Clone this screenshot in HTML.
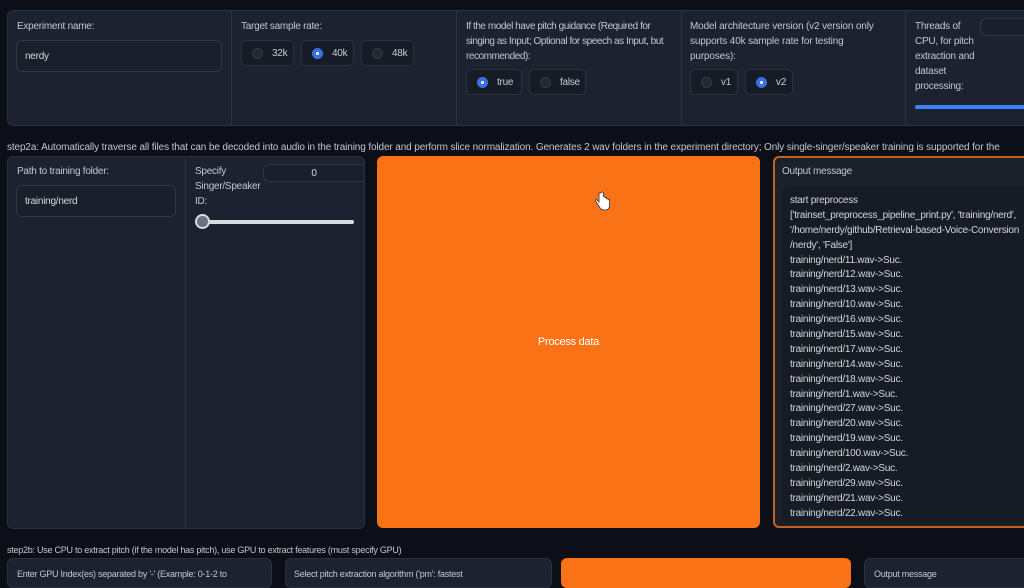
<!DOCTYPE html>
<html><head><meta charset="utf-8"><style>
*{box-sizing:border-box;margin:0;padding:0}
body{width:1024px;height:576px;overflow:hidden;background:#0c0f18;font-family:"Liberation Sans",sans-serif;color:#c9ccd2;font-size:10px;position:relative;letter-spacing:-0.25px}
.abs{position:absolute}
.panel{position:absolute;background:#1c2230;border:1px solid #2a313d;border-radius:6px}
.lbl{position:absolute;font-size:10px;line-height:15px;color:#c3c7ce}
.inp{position:absolute;background:#1a202b;border:1px solid #2f3744;border-radius:6px;font-size:10px;color:#d4d7dc;padding-left:8px;display:flex;align-items:center}
.vd{position:absolute;width:1px;background:#2c333f}
.rad{position:absolute;height:26px;background:#161b25;border:1px solid #2a313d;border-radius:5px;font-size:10px;color:#c9ccd2;display:flex;align-items:center;padding-left:10px}
.dot{width:11px;height:11px;border-radius:50%;background:#222834;border:1px solid #333a47;margin-right:9px}
.dot.on{background:#3b6fe8;border-color:#3b6fe8;position:relative}
.dot.on::after{content:"";position:absolute;left:3px;top:3px;width:3px;height:3px;border-radius:50%;background:#fff}
.orange{position:absolute;background:#f97316;border-radius:6px}
.out div{height:14.9px;line-height:14.9px;white-space:nowrap}
</style></head><body>
<div class="panel" style="left:7px;top:10px;width:1030px;height:116px"></div>
<div class="vd" style="left:231px;top:11px;height:114px"></div>
<div class="vd" style="left:456px;top:11px;height:114px"></div>
<div class="vd" style="left:681px;top:11px;height:114px"></div>
<div class="vd" style="left:905px;top:11px;height:114px"></div>
<div class="lbl" style="left:17px;top:19px">Experiment name:</div>
<div class="inp" style="left:16px;top:40px;width:206px;height:32px">nerdy</div>
<div class="lbl" style="left:241px;top:19px">Target sample rate:</div>
<div class="rad" style="left:241px;top:40px;width:53px"><span class="dot"></span>32k</div>
<div class="rad" style="left:301px;top:40px;width:53px"><span class="dot on"></span>40k</div>
<div class="rad" style="left:361px;top:40px;width:53px"><span class="dot"></span>48k</div>
<div class="lbl" style="left:466px;top:19px;width:212px;letter-spacing:-0.45px">If the model have pitch guidance (Required for singing as Input; Optional for speech as Input, but recommended):</div>
<div class="rad" style="left:466px;top:69px;width:56px"><span class="dot on"></span>true</div>
<div class="rad" style="left:529px;top:69px;width:57px"><span class="dot"></span>false</div>
<div class="lbl" style="left:690px;top:19px;width:192px;letter-spacing:-0.15px">Model architecture version (v2 version only supports 40k sample rate for testing purposes):</div>
<div class="rad" style="left:690px;top:69px;width:48px"><span class="dot"></span>v1</div>
<div class="rad" style="left:745px;top:69px;width:48px"><span class="dot on"></span>v2</div>
<div class="lbl" style="left:915px;top:19px;width:70px">Threads of CPU, for pitch extraction and dataset processing:</div>
<div class="inp" style="left:980px;top:18px;width:60px;height:18px"></div>
<div class="abs" style="left:915px;top:105px;width:120px;height:4px;background:#3b82f6;border-radius:2px"></div>

<div class="lbl" style="left:7px;top:140px;white-space:nowrap;letter-spacing:-0.12px">step2a: Automatically traverse all files that can be decoded into audio in the training folder and perform slice normalization. Generates 2 wav folders in the experiment directory; Only single-singer/speaker training is supported for the</div>

<div class="panel" style="left:7px;top:156px;width:358px;height:373px"></div>
<div class="vd" style="left:185px;top:157px;height:371px"></div>
<div class="lbl" style="left:17px;top:164px">Path to training folder:</div>
<div class="inp" style="left:16px;top:185px;width:160px;height:32px">training/nerd</div>
<div class="lbl" style="left:195px;top:164px;width:70px">Specify Singer/Speaker ID:</div>
<div class="inp" style="left:263px;top:164px;width:101px;height:18px;justify-content:center;padding:0;border-radius:6px 0 0 6px;border-right:none">0</div>
<div class="abs" style="left:200px;top:220px;width:154px;height:4px;background:#d8dbe0;border-radius:2px"></div>
<div class="abs" style="left:195px;top:214px;width:15px;height:15px;border-radius:50%;background:#6b7280;border:2px solid #d8dbe0"></div>

<div class="orange" style="left:377px;top:156px;width:383px;height:372px"></div>
<div class="abs" style="left:377px;top:336px;width:383px;text-align:center;color:#fff;font-size:11px">Process data</div>
<svg class="abs" style="left:594px;top:191px" width="16" height="20" viewBox="0 0 16 20"><path d="M5 2v9l-2-2c-1-1-2 0-1.5 1l4 6c1 2 2 3 5 3h1c3 0 4-2 4-5v-5c0-1-1.5-1-1.5 0v-1c0-1-1.5-1-1.5 0v-1c0-1-1.5-1-1.5 0v-1c0-1-1.5-1-1.5 0V2c0-1.3-2.5-1.3-2.5 0z" fill="#fff" stroke="#333" stroke-width="0.8"/></svg>

<div class="panel" style="left:773px;top:156px;width:270px;height:372px;border:2px solid #c2621f;background:#1b212b"></div>
<div class="lbl" style="left:782px;top:164px">Output message</div>
<div class="abs" style="left:782px;top:186px;width:260px;height:338px;background:#161b24;border-radius:6px"></div>
<div class="abs out" style="left:790px;top:194px;font-size:10px;color:#d4d7dc">
<div>start preprocess</div>
<div>['trainset_preprocess_pipeline_print.py', 'training/nerd',</div>
<div>'/home/nerdy/github/Retrieval-based-Voice-Conversion</div>
<div>/nerdy', 'False']</div>
<div>training/nerd/11.wav-&gt;Suc.</div>
<div>training/nerd/12.wav-&gt;Suc.</div>
<div>training/nerd/13.wav-&gt;Suc.</div>
<div>training/nerd/10.wav-&gt;Suc.</div>
<div>training/nerd/16.wav-&gt;Suc.</div>
<div>training/nerd/15.wav-&gt;Suc.</div>
<div>training/nerd/17.wav-&gt;Suc.</div>
<div>training/nerd/14.wav-&gt;Suc.</div>
<div>training/nerd/18.wav-&gt;Suc.</div>
<div>training/nerd/1.wav-&gt;Suc.</div>
<div>training/nerd/27.wav-&gt;Suc.</div>
<div>training/nerd/20.wav-&gt;Suc.</div>
<div>training/nerd/19.wav-&gt;Suc.</div>
<div>training/nerd/100.wav-&gt;Suc.</div>
<div>training/nerd/2.wav-&gt;Suc.</div>
<div>training/nerd/29.wav-&gt;Suc.</div>
<div>training/nerd/21.wav-&gt;Suc.</div>
<div>training/nerd/22.wav-&gt;Suc.</div>
</div>

<div class="lbl" style="left:7px;top:543px;white-space:nowrap;font-size:9px">step2b: Use CPU to extract pitch (if the model has pitch), use GPU to extract features (must specify GPU)</div>
<div class="panel" style="left:7px;top:558px;width:265px;height:30px"></div>
<div class="lbl" style="left:17px;top:567px;font-size:9px">Enter GPU Index(es) separated by '-' (Example: 0-1-2 to</div>
<div class="panel" style="left:285px;top:558px;width:267px;height:30px"></div>
<div class="lbl" style="left:294px;top:567px;font-size:9px">Select pitch extraction algorithm ('pm': fastest</div>
<div class="orange" style="left:561px;top:558px;width:290px;height:30px"></div>
<div class="panel" style="left:864px;top:558px;width:180px;height:30px"></div>
<div class="lbl" style="left:874px;top:567px;font-size:9px">Output message</div>
</body></html>
